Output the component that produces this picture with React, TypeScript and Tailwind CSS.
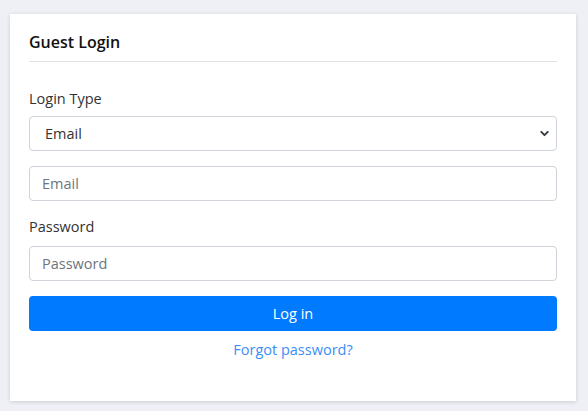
import { ChevronDown } from "lucide-react";

const font = { fontFamily: '"Open Sans", "Noto Sans", Arial, sans-serif' };

export default function App() {
    return <div className="h-[411px] w-[588px] bg-[#eef0f5] pt-[14px] pl-[10px] pr-[12px] text-[#212529]" style={font}>
        <div className="h-[387px] bg-white px-[19px] shadow-[0_1px_4px_rgba(0,0,0,0.15)]">
            <div className="border-b border-[#dee2e6] pt-[16px] pb-[7px]">
                <h1 className="text-[16px] leading-6 font-semibold text-[#111]">Guest Login</h1>
            </div>
            <form className="pt-[26px]">
                <label className="block text-[14.5px] leading-[22px] text-[#333]">Login Type</label>
                <div className="relative mt-[6px]">
                    <select className="block h-[35px] w-full appearance-none rounded border border-[#ced4da] bg-white pl-[15px] text-[14.5px] text-[#333] outline-none" defaultValue="email">
                        <option value="email">Email</option>
                        <option value="mobile">Mobile</option>
                    </select>
                    <ChevronDown className="pointer-events-none absolute right-[6px] top-[11px] h-[13px] w-[13px] text-[#343a40]" strokeWidth={3.5} />
                </div>
                <input className="mt-[15px] block h-[35px] w-full rounded border border-[#ced4da] px-[12px] text-[14.5px] text-[#333] outline-none placeholder:text-[#6c757d]" placeholder="Email" />
                <label className="mt-[15px] block text-[14.5px] leading-[22px] text-[#333]">Password</label>
                <input type="password" className="mt-[8px] block h-[35px] w-full rounded border border-[#ced4da] px-[12px] text-[14.5px] text-[#333] outline-none placeholder:text-[#6c757d]" placeholder="Password" />
                <button type="button" className="mt-[15px] block h-[35px] w-full rounded bg-[#007bff] text-[14.5px] text-white">Log in</button>
                <div className="mt-[6px] text-center">
                    <a href="#" className="text-[14.5px] leading-[22px] text-[#3b8ef7]">Forgot password?</a>
                </div>
            </form>
        </div>
    </div>
}
